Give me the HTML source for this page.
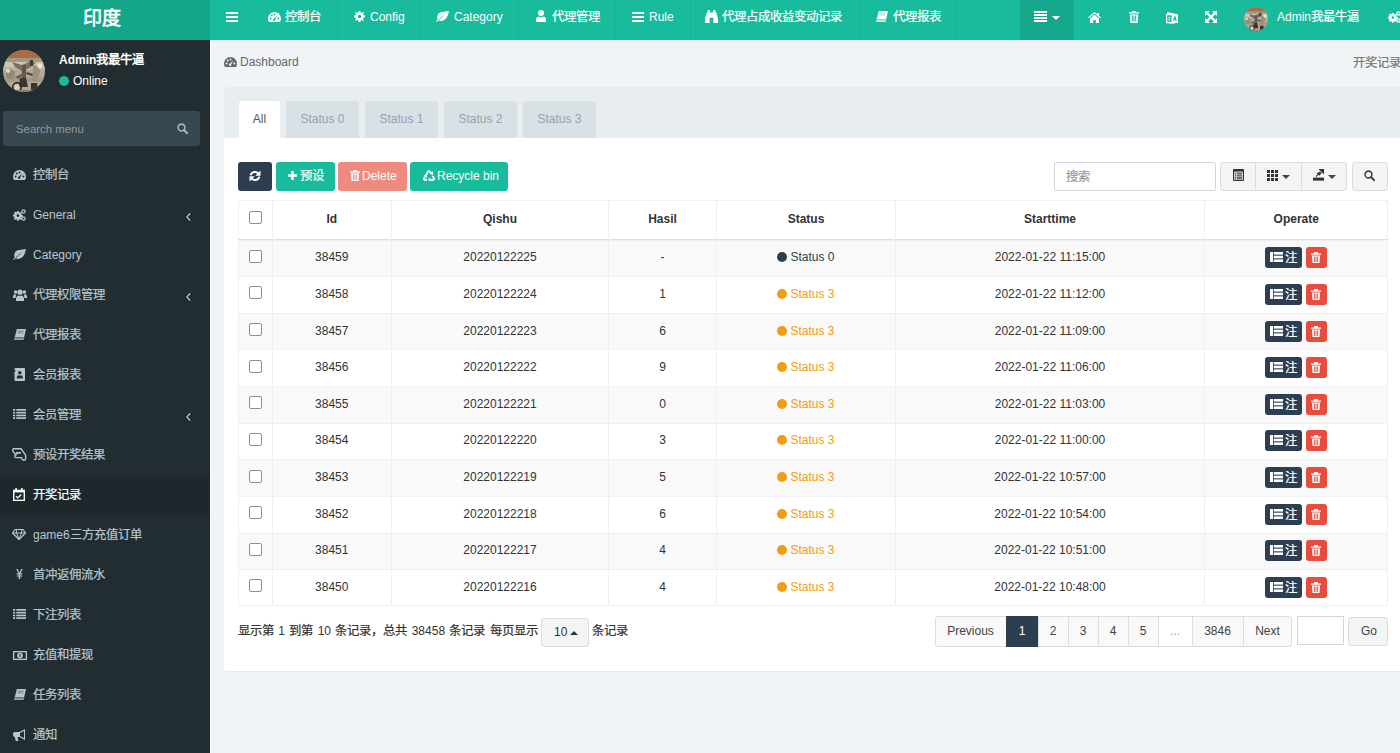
<!DOCTYPE html><html lang="zh-CN"><head><meta charset="utf-8"><style>
*{box-sizing:border-box;margin:0;padding:0}
html,body{width:1400px;height:753px;overflow:hidden;background:#f1f4f6}
body{font-family:"Liberation Sans",sans-serif;font-size:12px;color:#333;position:relative}
.a{position:absolute}
svg{display:block}
.nw{white-space:nowrap}
.c{font-size:1.033em;-webkit-text-stroke:0.22px currentColor}
.bo .c{font-weight:700;-webkit-text-stroke:0}
</style></head><body><div class="a" style="left:0;top:0;width:210px;height:40px;background:#15a589"></div>
<div class="a nw bo" style="left:83px;top:5px;font-size:18.4px;font-weight:bold;color:#fff;line-height:24px;top:6.5px"><span class="c">印度</span></div>
<div class="a" style="left:210px;top:0;width:1190px;height:40px;background:#18bc9c"></div>
<div class="a" style="left:226px;top:12px;color:#fff"><svg width="12" height="10" viewBox="0 0 12 10" fill="currentColor" ><rect width="12" height="2"/><rect y="4" width="12" height="2"/><rect y="8" width="12" height="2"/></svg></div>
<div class="a" style="left:337px;top:0;width:1px;height:40px;background:rgba(0,0,0,0.05)"></div>
<div class="a" style="left:268px;top:12px;color:#fff"><svg width="13" height="10" viewBox="0 0 13 10" fill="currentColor" ><path d="M6.5 0A6.5 6.5 0 0 0 0 6.5c0 1.3.3 2.4.9 3.5h11.2c.6-1.1.9-2.2.9-3.5A6.5 6.5 0 0 0 6.5 0z"/><g fill="#18bc9c"><circle cx="2.6" cy="6.6" r="1"/><circle cx="3.8" cy="3.6" r="1"/><circle cx="6.5" cy="2.4" r="1"/><circle cx="10.4" cy="6.6" r="1"/><path d="M9.6 3.2 7.2 7.2a1.2 1.2 0 1 1-1.2-.6z"/></g></svg></div>
<div class="a nw" style="left:285px;top:9px;line-height:16px;color:#fff"><span class="c">控制台</span></div>
<div class="a" style="left:420px;top:0;width:1px;height:40px;background:rgba(0,0,0,0.05)"></div>
<div class="a" style="left:354px;top:11px;color:#fff"><svg width="11" height="11" viewBox="0 0 12 12" fill="currentColor" ><path d="M5 0h2l.3 1.8 1.2.5L10 1.2 10.8 2l-1 1.5.5 1.2L12 5v2l-1.8.3-.5 1.2 1 1.5-.8.8-1.5-1-1.2.5L7 12H5l-.3-1.8-1.2-.5-1.5 1-.8-.8 1-1.5-.5-1.2L0 7V5l1.8-.3.5-1.2-1-1.5L2 1.2l1.5 1 1.2-.5z"/><circle cx="6" cy="6" r="2" fill="#18bc9c"/></svg></div>
<div class="a nw" style="left:370px;top:9px;line-height:16px;color:#fff">Config</div>
<div class="a" style="left:518px;top:0;width:1px;height:40px;background:rgba(0,0,0,0.05)"></div>
<div class="a" style="left:436px;top:11px;color:#fff"><svg width="13" height="11" viewBox="0 0 13 11" fill="currentColor"><path d="M13 0C9 1 3 0 1.5 4.5.8 6.6 1.4 8 2 8.6L0 10.3l.6.7 2-1.7C4.5 10.5 8 10 10 7.5 12 5 12.5 2 13 0zM3 8.6C5 6 7.5 4 10 3 7.5 4.5 5.2 6.5 3.6 9z"/></svg></div>
<div class="a nw" style="left:454px;top:9px;line-height:16px;color:#fff">Category</div>
<div class="a" style="left:615px;top:0;width:1px;height:40px;background:rgba(0,0,0,0.05)"></div>
<div class="a" style="left:536px;top:10px;color:#fff"><svg width="10" height="12" viewBox="0 0 10 12" fill="currentColor"><circle cx="5" cy="3" r="3"/><path d="M0 12V9.5C0 7.8 1.3 6.8 2.6 6.5 3.3 7 4.1 7.3 5 7.3S6.7 7 7.4 6.5C8.7 6.8 10 7.8 10 9.5V12z"/></svg></div>
<div class="a nw" style="left:552px;top:9px;line-height:16px;color:#fff"><span class="c">代理管理</span></div>
<div class="a" style="left:690px;top:0;width:1px;height:40px;background:rgba(0,0,0,0.05)"></div>
<div class="a" style="left:632px;top:12px;color:#fff"><svg width="12" height="10" viewBox="0 0 12 10" fill="currentColor" ><rect width="12" height="2"/><rect y="4" width="12" height="2"/><rect y="8" width="12" height="2"/></svg></div>
<div class="a nw" style="left:649px;top:9px;line-height:16px;color:#fff">Rule</div>
<div class="a" style="left:859px;top:0;width:1px;height:40px;background:rgba(0,0,0,0.05)"></div>
<div class="a" style="left:705px;top:10px;color:#fff"><svg width="13" height="13" viewBox="0 0 13 13" fill="currentColor" ><path d="M2.7 0h2v1.8h.5V8H4.6v5H0V8.5l1.6-5.3.9-1.4zM10.3 0h-2v1.8h-.5V8h.6v5H13V8.5l-1.6-5.3-.9-1.4z"/><rect x="5" y="2.6" width="3" height="5"/></svg></div>
<div class="a nw" style="left:722px;top:9px;line-height:16px;color:#fff"><span class="c">代理占成收益变动记录</span></div>
<div class="a" style="left:956px;top:0;width:1px;height:40px;background:rgba(0,0,0,0.05)"></div>
<div class="a" style="left:876px;top:11px;color:#fff"><svg width="12" height="11" viewBox="0 0 12 11" fill="currentColor" ><path d="M2.9 0H12L9.6 10.8H0z"/><path d="M.6 8.9h9.2" stroke="#18bc9c" stroke-width=".9"/><path d="M3.9 2.2h5.8M3.5 4h5.8" stroke="#18bc9c" stroke-width=".8" opacity=".55"/></svg></div>
<div class="a nw" style="left:893px;top:9px;line-height:16px;color:#fff"><span class="c">代理报表</span></div>
<div class="a" style="left:1020px;top:0;width:54px;height:40px;background:rgba(0,0,0,0.1)"></div>
<div class="a" style="left:1034px;top:11px"><svg width="13" height="11" fill="#fff"><rect width="13" height="2"/><rect y="3" width="13" height="2"/><rect y="6" width="13" height="2"/><rect y="9" width="13" height="2"/></svg></div>
<div class="a" style="left:1052px;top:16px;color:#fff"><svg width="8" height="4" viewBox="0 0 8 4" fill="currentColor"><path d="M0 0h8L4 4z"/></svg></div>
<div class="a" style="left:1088px;top:12px;color:#fff"><svg width="13" height="11" viewBox="0 0 13 11" fill="currentColor"><path d="M6.5 0 0 5.5l.8.8L6.5 1.5l5.7 4.8.8-.8L11 3.8V.8H9.5v1.7z"/><path d="M2 6.5 6.5 2.7 11 6.5V11H7.8V8H5.2v3H2z"/></svg></div>
<div class="a" style="left:1129px;top:11px;color:#fff"><svg width="10" height="12" viewBox="0 0 10 12" fill="currentColor"><path d="M3.2 0h3.6l.5 1.2H10V2.6H0V1.2h2.7z"/><path d="M.8 3.4h8.4L8.6 12H1.4zM2.8 4.5v6h1v-6zm1.7 0v6h1v-6zm1.7 0v6h1v-6z" fill-rule="evenodd"/></svg></div>
<div class="a" style="left:1166px;top:11px;color:#fff"><svg width="12" height="13" viewBox="0 0 12 13" fill="currentColor" ><path d="M1.2 1 11 3.2V4H1.2z"/><rect x=".6" y="3.6" width="5.6" height="8" fill="none" stroke="currentColor" stroke-width="1.2"/><path d="M6 3.2h6v8.8H6z"/><path d="M2.2 6h2.2v.9H2.2zM2.6 7.5h1.4v2.2H2.6z" opacity=".8"/><path d="M8.3 5.2h1.2l1.3 5H9.7l-.3-1.2H8.3L8 10.2H7z" fill="#18bc9c"/><path d="M3.5 12.5h5" stroke="currentColor" stroke-width=".9" opacity=".7"/></svg></div>
<div class="a" style="left:1205px;top:11px;color:#fff"><svg width="12" height="12" viewBox="0 0 12 12" fill="currentColor" ><path d="M2.2 2.2 9.8 9.8M9.8 2.2 2.2 9.8" stroke="currentColor" stroke-width="2.2"/><path d="M0 0h5L0 5zM12 0v5L7 0zM0 12V7l5 5zM12 12H7l5-5z"/></svg></div>
<div class="a" style="left:1244px;top:7px"><svg width="24" height="24" viewBox="0 0 42 42"><defs><clipPath id="cp2"><circle cx="21" cy="21" r="21"/></clipPath></defs><g clip-path="url(#cp2)">
<rect width="42" height="42" fill="#b3a895"/>
<rect y="0" width="42" height="8" fill="#ad6a47"/>
<path d="M0 8h42v4H0z" fill="#a6987f"/>
<path d="M2 12h38v5H2z" fill="#cfc6b6"/>
<path d="M0 17h42v3H0z" fill="#bdb29f"/>
<path d="M0 27h42v5H0z" fill="#a89b85"/>
<path d="M9 12 19 15 28 11 33 13 26 18 19 21 12 17z" fill="#7a705f"/>
<path d="M27 10h3v6h-3z" fill="#3f3a33"/>
<path d="M19 15h4v14h-4z" fill="#5e564a"/>
<path d="M3 21c3-2 7-2 9 1l-1 7c-3 1-6 0-8-2z" fill="#958a76"/>
<path d="M30 15c4 0 7 3 7 6l-2 9c-2 2-5 2-6 0z" fill="#9d917c"/>
<circle cx="37" cy="16" r="2.5" fill="#e9e5de"/>
<circle cx="5" cy="21" r="2" fill="#e0dbd2"/>
<path d="M17 28h6l2 9h-9z" fill="#3a352e"/>
<path d="M28 33h6l1 7h-7z" fill="#36312b"/>
<circle cx="14" cy="37" r="4.3" fill="none" stroke="#2b2823" stroke-width="1.5"/>
<circle cx="14" cy="37" r="2.6" fill="#d9d2c5"/>
<path d="M12 27 20 23l2 2-7 4z" fill="#6a6151"/>
<path d="M24 22l6 2-1 2-6-2z" fill="#4d463c"/>
<rect y="40" width="42" height="2" fill="#8d806a"/>
</g></svg></div>
<div class="a nw" style="left:1277px;top:9px;line-height:16px;color:#fff">Admin<span class="c">我最牛逼</span></div>
<div class="a" style="left:1388px;top:11px;color:#fff"><svg width="13" height="12" viewBox="0 0 13 12" fill="currentColor" ><path d="M3.5 2.5h1.6l.3 1.2.8.4 1-.7 1.1 1.1-.7 1 .4.8 1.2.3v1.6l-1.2.3-.4.8.7 1-1.1 1.1-1-.7-.8.4-.3 1.2H3.5l-.3-1.2-.8-.4-1 .7L.3 10l.7-1-.4-.8L-.6 7.9V6.3l1.2-.3.4-.8-.7-1L1.4 3.1l1 .7.8-.4z" transform="translate(.6 -.5)"/><circle cx="4.9" cy="6.6" r="1.3" fill="#18bc9c"/><circle cx="10.5" cy="2.5" r="2.2"/><circle cx="10.5" cy="2.5" r="1" fill="#18bc9c"/><circle cx="10.5" cy="9.5" r="2.2"/><circle cx="10.5" cy="9.5" r="1" fill="#18bc9c"/></svg></div>
<div class="a" style="left:0;top:40px;width:210px;height:713px;background:#222d32"></div>
<div class="a" style="left:3px;top:49.5px"><svg width="42" height="42" viewBox="0 0 42 42"><defs><clipPath id="cp1"><circle cx="21" cy="21" r="21"/></clipPath></defs><g clip-path="url(#cp1)">
<rect width="42" height="42" fill="#b3a895"/>
<rect y="0" width="42" height="8" fill="#ad6a47"/>
<path d="M0 8h42v4H0z" fill="#a6987f"/>
<path d="M2 12h38v5H2z" fill="#cfc6b6"/>
<path d="M0 17h42v3H0z" fill="#bdb29f"/>
<path d="M0 27h42v5H0z" fill="#a89b85"/>
<path d="M9 12 19 15 28 11 33 13 26 18 19 21 12 17z" fill="#7a705f"/>
<path d="M27 10h3v6h-3z" fill="#3f3a33"/>
<path d="M19 15h4v14h-4z" fill="#5e564a"/>
<path d="M3 21c3-2 7-2 9 1l-1 7c-3 1-6 0-8-2z" fill="#958a76"/>
<path d="M30 15c4 0 7 3 7 6l-2 9c-2 2-5 2-6 0z" fill="#9d917c"/>
<circle cx="37" cy="16" r="2.5" fill="#e9e5de"/>
<circle cx="5" cy="21" r="2" fill="#e0dbd2"/>
<path d="M17 28h6l2 9h-9z" fill="#3a352e"/>
<path d="M28 33h6l1 7h-7z" fill="#36312b"/>
<circle cx="14" cy="37" r="4.3" fill="none" stroke="#2b2823" stroke-width="1.5"/>
<circle cx="14" cy="37" r="2.6" fill="#d9d2c5"/>
<path d="M12 27 20 23l2 2-7 4z" fill="#6a6151"/>
<path d="M24 22l6 2-1 2-6-2z" fill="#4d463c"/>
<rect y="40" width="42" height="2" fill="#8d806a"/>
</g></svg></div>
<div class="a nw bo" style="left:59px;top:52px;font-weight:bold;color:#fff;line-height:16px">Admin<span class="c">我最牛逼</span></div>
<div class="a" style="left:59px;top:76px"><svg width="10" height="10" viewBox="0 0 10 10" fill="currentColor" ><circle cx="5" cy="5" r="5" fill="#18bc9c"/></svg></div>
<div class="a nw" style="left:73px;top:73px;color:#fff;line-height:16px">Online</div>
<div class="a" style="left:3px;top:111px;width:197px;height:35px;background:#374850;border-radius:3px"></div>
<div class="a nw" style="left:16px;top:121px;color:#8f9ca2;line-height:16px;font-size:11.4px">Search menu</div>
<div class="a" style="left:177px;top:123px;color:#a7b5bb"><svg width="11" height="11" viewBox="0 0 11 11" fill="currentColor" ><circle cx="4.5" cy="4.5" r="3.4" fill="none" stroke="currentColor" stroke-width="1.6"/><path d="M7 7l3.2 3.2" stroke="currentColor" stroke-width="2" stroke-linecap="round"/></svg></div>
<div class="a" style="left:13px;top:170px;color:#b8c7ce"><svg width="13" height="10" viewBox="0 0 13 10" fill="currentColor" ><path d="M6.5 0A6.5 6.5 0 0 0 0 6.5c0 1.3.3 2.4.9 3.5h11.2c.6-1.1.9-2.2.9-3.5A6.5 6.5 0 0 0 6.5 0z"/><g fill="#222d32"><circle cx="2.6" cy="6.6" r="1"/><circle cx="3.8" cy="3.6" r="1"/><circle cx="6.5" cy="2.4" r="1"/><circle cx="10.4" cy="6.6" r="1"/><path d="M9.6 3.2 7.2 7.2a1.2 1.2 0 1 1-1.2-.6z"/></g></svg></div>
<div class="a nw" style="left:33px;top:167px;line-height:16px;color:#b8c7ce"><span class="c">控制台</span></div>
<div class="a" style="left:13px;top:209px;color:#b8c7ce"><svg width="13" height="12" viewBox="0 0 13 12" fill="currentColor" ><path d="M3.5 2.5h1.6l.3 1.2.8.4 1-.7 1.1 1.1-.7 1 .4.8 1.2.3v1.6l-1.2.3-.4.8.7 1-1.1 1.1-1-.7-.8.4-.3 1.2H3.5l-.3-1.2-.8-.4-1 .7L.3 10l.7-1-.4-.8L-.6 7.9V6.3l1.2-.3.4-.8-.7-1L1.4 3.1l1 .7.8-.4z" transform="translate(.6 -.5)"/><circle cx="4.9" cy="6.6" r="1.3" fill="#222d32"/><circle cx="10.5" cy="2.5" r="2.2"/><circle cx="10.5" cy="2.5" r="1" fill="#222d32"/><circle cx="10.5" cy="9.5" r="2.2"/><circle cx="10.5" cy="9.5" r="1" fill="#222d32"/></svg></div>
<div class="a nw" style="left:33px;top:207px;line-height:16px;color:#b8c7ce">General</div>
<div class="a" style="left:186px;top:213px;color:#b8c7ce"><svg width="5" height="8" viewBox="0 0 5 8" fill="currentColor" ><path d="M4.2.5.8 4l3.4 3.5" fill="none" stroke="currentColor" stroke-width="1.3"/></svg></div>
<div class="a" style="left:13px;top:249px;color:#b8c7ce"><svg width="13" height="11" viewBox="0 0 13 11" fill="currentColor"><path d="M13 0C9 1 3 0 1.5 4.5.8 6.6 1.4 8 2 8.6L0 10.3l.6.7 2-1.7C4.5 10.5 8 10 10 7.5 12 5 12.5 2 13 0zM3 8.6C5 6 7.5 4 10 3 7.5 4.5 5.2 6.5 3.6 9z"/></svg></div>
<div class="a nw" style="left:33px;top:247px;line-height:16px;color:#b8c7ce">Category</div>
<div class="a" style="left:13px;top:289px;color:#b8c7ce"><svg width="14" height="12" viewBox="0 0 14 12" fill="currentColor" ><circle cx="7" cy="3.2" r="2.6"/><path d="M3 12V9.6C3 7.8 4.4 6.6 5.6 6.4 6 6.7 6.5 6.9 7 6.9s1-.2 1.4-.5C9.6 6.6 11 7.8 11 9.6V12z"/><circle cx="2.6" cy="3" r="1.8"/><circle cx="11.4" cy="3" r="1.8"/><path d="M0 9V7.5C0 6.4.8 5.5 1.8 5.3c.4.3.8.4 1.3.4.2 0 .4 0 .6-.1-.6.6-1 1.4-1 2.4V9zM14 9V7.5c0-1.1-.8-2-1.8-2.2-.4.3-.8.4-1.3.4-.2 0-.4 0-.6-.1.6.6 1 1.4 1 2.4V9z"/></svg></div>
<div class="a nw" style="left:33px;top:287px;line-height:16px;color:#b8c7ce"><span class="c">代理权限管理</span></div>
<div class="a" style="left:186px;top:293px;color:#b8c7ce"><svg width="5" height="8" viewBox="0 0 5 8" fill="currentColor" ><path d="M4.2.5.8 4l3.4 3.5" fill="none" stroke="currentColor" stroke-width="1.3"/></svg></div>
<div class="a" style="left:14px;top:329px;color:#b8c7ce"><svg width="12" height="11" viewBox="0 0 12 11" fill="currentColor" ><path d="M2.9 0H12L9.6 10.8H0z"/><path d="M.6 8.9h9.2" stroke="#222d32" stroke-width=".9"/><path d="M3.9 2.2h5.8M3.5 4h5.8" stroke="#222d32" stroke-width=".8" opacity=".55"/></svg></div>
<div class="a nw" style="left:33px;top:327px;line-height:16px;color:#b8c7ce"><span class="c">代理报表</span></div>
<div class="a" style="left:14px;top:368px;color:#b8c7ce"><svg width="11" height="13" viewBox="0 0 11 13" fill="currentColor" ><rect x="0.5" y="0" width="10.5" height="13" rx="1"/><rect x="0" y="2" width="1.5" height="1.5" fill="#222d32"/><circle cx="5.8" cy="4.8" r="1.8" fill="#222d32"/><path d="M2.8 10.5V9.2c0-1 .9-1.8 1.8-1.9.4.2.8.4 1.2.4s.8-.2 1.2-.4c.9.1 1.8.9 1.8 1.9v1.3z" fill="#222d32"/></svg></div>
<div class="a nw" style="left:33px;top:367px;line-height:16px;color:#b8c7ce"><span class="c">会员报表</span></div>
<div class="a" style="left:13px;top:409px;color:#b8c7ce"><svg width="13" height="10" viewBox="0 0 13 10" fill="currentColor" ><rect width="2.2" height="1.7"/><rect x="3.3" width="9.7" height="1.7"/><rect y="2.8" width="2.2" height="1.7"/><rect x="3.3" y="2.8" width="9.7" height="1.7"/><rect y="5.6" width="2.2" height="1.7"/><rect x="3.3" y="5.6" width="9.7" height="1.7"/><rect y="8.3" width="2.2" height="1.7"/><rect x="3.3" y="8.3" width="9.7" height="1.7"/></svg></div>
<div class="a nw" style="left:33px;top:407px;line-height:16px;color:#b8c7ce"><span class="c">会员管理</span></div>
<div class="a" style="left:186px;top:413px;color:#b8c7ce"><svg width="5" height="8" viewBox="0 0 5 8" fill="currentColor" ><path d="M4.2.5.8 4l3.4 3.5" fill="none" stroke="currentColor" stroke-width="1.3"/></svg></div>
<div class="a" style="left:12px;top:448px;color:#b8c7ce"><svg width="15" height="13" viewBox="0 0 15 13" fill="currentColor" ><path d="M1.6 .8H9.2L13.6 7.2V11Q13.6 12 12.6 12H11.4Q10.6 12 10.2 11.2L9.4 9.6H3.8Q2.8 9.6 2.8 8.6V7.8Q2.8 6.8 3.8 6.8H4.4L1.5 4.2Q.8 3.5 .8 2.6V1.6Q.8 .8 1.6 .8z" fill="none" stroke="currentColor" stroke-width="1.4" stroke-linejoin="round"/><rect x="4" y="4" width="4.8" height="1.8"/></svg></div>
<div class="a nw" style="left:33px;top:447px;line-height:16px;color:#b8c7ce"><span class="c">预设开奖结果</span></div>
<div class="a" style="left:0;top:476px;width:210px;height:39px;background:#1e282c"></div>
<div class="a" style="left:13px;top:488px;color:#fff"><svg width="12" height="13" viewBox="0 0 12 13" fill="currentColor" ><path d="M0 1.8h2.3V0h1.6v1.8h4.2V0h1.6v1.8H12V13H0z"/><rect x="1.4" y="4.4" width="9.2" height="7.3" fill="#1e282c"/><path d="M3.4 7.8l1.3 1.3 3.2-3 .8.8-4 3.8-2.1-2.1z"/></svg></div>
<div class="a nw" style="left:33px;top:487px;line-height:16px;color:#fff"><span class="c">开奖记录</span></div>
<div class="a" style="left:12px;top:529px;color:#b8c7ce"><svg width="14" height="11" viewBox="0 0 14 11" fill="currentColor" ><path d="M3 .5h8l2.5 3.5L7 10.5.5 4z" fill="none" stroke="currentColor" stroke-width="1.2" stroke-linejoin="round"/><path d="M.8 4h12.4M4.5 4 7 10M9.5 4 7 10M4.3 .8 4.5 4M9.7 .8 9.5 4" fill="none" stroke="currentColor" stroke-width="1"/></svg></div>
<div class="a nw" style="left:33px;top:527px;line-height:16px;color:#b8c7ce">game6<span class="c">三方充值订单</span></div>
<div class="a" style="left:16px;top:569px;color:#b8c7ce"><svg width="7" height="10" viewBox="0 0 8 12" fill="currentColor" ><path d="M0 0h1.8L4 4.5 6.2 0H8L5.3 5.2H7.3v1.3H4.9v1.2h2.4V9H4.9v3H3.1V9H.7V7.7h2.4V6.5H.7V5.2h2L0 0z"/></svg></div>
<div class="a nw" style="left:33px;top:567px;line-height:16px;color:#b8c7ce"><span class="c">首冲返佣流水</span></div>
<div class="a" style="left:13px;top:609px;color:#b8c7ce"><svg width="13" height="10" viewBox="0 0 13 10" fill="currentColor" ><rect width="2.2" height="1.7"/><rect x="3.3" width="9.7" height="1.7"/><rect y="2.8" width="2.2" height="1.7"/><rect x="3.3" y="2.8" width="9.7" height="1.7"/><rect y="5.6" width="2.2" height="1.7"/><rect x="3.3" y="5.6" width="9.7" height="1.7"/><rect y="8.3" width="2.2" height="1.7"/><rect x="3.3" y="8.3" width="9.7" height="1.7"/></svg></div>
<div class="a nw" style="left:33px;top:607px;line-height:16px;color:#b8c7ce"><span class="c">下注列表</span></div>
<div class="a" style="left:13px;top:651px;color:#b8c7ce"><svg width="14" height="9" viewBox="0 0 14 9" fill="currentColor" ><rect width="14" height="9"/><rect x="1.3" y="1.3" width="11.4" height="6.4" fill="#222d32"/><ellipse cx="7" cy="4.5" rx="2.8" ry="2.9"/><rect x="6.5" y="2.9" width="1.1" height="3.2" fill="#222d32"/></svg></div>
<div class="a nw" style="left:33px;top:647px;line-height:16px;color:#b8c7ce"><span class="c">充值和提现</span></div>
<div class="a" style="left:14px;top:689px;color:#b8c7ce"><svg width="12" height="11" viewBox="0 0 12 11" fill="currentColor" ><path d="M2.9 0H12L9.6 10.8H0z"/><path d="M.6 8.9h9.2" stroke="#222d32" stroke-width=".9"/><path d="M3.9 2.2h5.8M3.5 4h5.8" stroke="#222d32" stroke-width=".8" opacity=".55"/></svg></div>
<div class="a nw" style="left:33px;top:687px;line-height:16px;color:#b8c7ce"><span class="c">任务列表</span></div>
<div class="a" style="left:13px;top:729px;color:#b8c7ce"><svg width="13" height="12" viewBox="0 0 13 12" fill="currentColor" ><path d="M12 0v11L6.5 8H4.5l.8 3.2c.1.4-.2.8-.6.8H3.2c-.3 0-.5-.2-.6-.5L1.8 8C.8 7.9 0 7 0 6V5c0-1.1.9-2 2-2h4.5z"/><path d="M11 2 7 3.9v3.2L11 9z" fill="#222d32"/></svg></div>
<div class="a nw" style="left:33px;top:727px;line-height:16px;color:#b8c7ce"><span class="c">通知</span></div>
<div class="a" style="left:210px;top:40px;width:1px;height:713px;background:#fbfcfd"></div>
<div class="a" style="left:211px;top:40px;width:1189px;height:3px;background:linear-gradient(#e6eaed,#f1f4f6)"></div>
<div class="a" style="left:224px;top:57px;color:#666"><svg width="13" height="10" viewBox="0 0 13 10" fill="currentColor" ><path d="M6.5 0A6.5 6.5 0 0 0 0 6.5c0 1.3.3 2.4.9 3.5h11.2c.6-1.1.9-2.2.9-3.5A6.5 6.5 0 0 0 6.5 0z"/><g fill="#f1f4f6"><circle cx="2.6" cy="6.6" r="1"/><circle cx="3.8" cy="3.6" r="1"/><circle cx="6.5" cy="2.4" r="1"/><circle cx="10.4" cy="6.6" r="1"/><path d="M9.6 3.2 7.2 7.2a1.2 1.2 0 1 1-1.2-.6z"/></g></svg></div>
<div class="a nw" style="left:240px;top:54px;color:#666;line-height:16px">Dashboard</div>
<div class="a nw" style="left:1353px;top:55px;color:#777;line-height:16px"><span class="c">开奖记录</span></div>
<div class="a" style="left:224px;top:87px;width:1180px;height:584px;background:#fff;border-radius:3px;box-shadow:0 1px 1px rgba(0,0,0,0.05)"></div>
<div class="a" style="left:224px;top:87px;width:1180px;height:51px;background:#e8edf0;border-radius:3px 3px 0 0"></div>
<div class="a nw" style="left:239px;top:101px;width:41px;height:37px;background:#fff;border-radius:3px 3px 0 0;color:#555;text-align:center;line-height:36px">All</div>
<div class="a nw" style="left:286px;top:101px;width:73px;height:37px;background:#d9e0e6;border-radius:3px 3px 0 0;color:#95a2ab;text-align:center;line-height:36px">Status 0</div>
<div class="a nw" style="left:365px;top:101px;width:73px;height:37px;background:#d9e0e6;border-radius:3px 3px 0 0;color:#95a2ab;text-align:center;line-height:36px">Status 1</div>
<div class="a nw" style="left:444px;top:101px;width:73px;height:37px;background:#d9e0e6;border-radius:3px 3px 0 0;color:#95a2ab;text-align:center;line-height:36px">Status 2</div>
<div class="a nw" style="left:523px;top:101px;width:73px;height:37px;background:#d9e0e6;border-radius:3px 3px 0 0;color:#95a2ab;text-align:center;line-height:36px">Status 3</div>
<div class="a nw" style="left:238px;top:162px;width:34px;height:29px;background:#2c3e50;border-radius:3px;color:#fff;"><div class="a" style="left:11px;top:8px"><svg width="12" height="12" viewBox="0 0 12 12" fill="currentColor" ><g fill="none" stroke="currentColor" stroke-width="2.1"><path d="M1.6 5.2A4.5 4.5 0 0 1 9.4 3.6"/><path d="M10.4 6.8A4.5 4.5 0 0 1 2.6 8.4"/></g><path d="M11.5 0.6V5.8H6.3z"/><path d="M.5 11.4V6.2h5.2z"/></svg></div></div>
<div class="a nw" style="left:276px;top:162px;width:59px;height:29px;background:#18bc9c;border-radius:3px;color:#fff;"><div class="a" style="left:12px;top:9px"><svg width="9" height="9" viewBox="0 0 9 9" fill="currentColor" ><path d="M3.25 0h2.5v3.25H9v2.5H5.75V9h-2.5V5.75H0v-2.5h3.25z"/></svg></div><div class="a" style="left:24px;top:6px;line-height:16px"><span class="c">预设</span></div></div>
<div class="a nw" style="left:338px;top:162px;width:69px;height:29px;background:#ef8a80;border-radius:3px;color:#fff;"><div class="a" style="left:12px;top:8px"><svg width="10" height="11" viewBox="0 0 10 11" fill="currentColor" ><path d="M3.3 0h3.4l.5 1.4H10v1.3H0V1.4h2.8z"/><path d="M.9 3.4h8.2L8.5 11h-7zM2.9 4.6v5.4h.9V4.6zm1.65 0v5.4h.9V4.6zm1.65 0v5.4h.9V4.6z" fill-rule="evenodd"/></svg></div><div class="a" style="left:24px;top:6px;line-height:16px">Delete</div></div>
<div class="a nw" style="left:410px;top:162px;width:98px;height:29px;background:#18bc9c;border-radius:3px;color:#fff;"><div class="a" style="left:13px;top:8px"><svg width="12" height="11" viewBox="0 0 12 11" fill="currentColor" ><g fill="none" stroke="currentColor" stroke-width="1.9" stroke-linejoin="round"><path d="M2.3 6.3 4.9 1.8c.5-.8 1.6-.8 2.1 0l.9 1.5"/><path d="M9.6 6 10.9 8.2c.5.8-.1 1.8-1 1.8H6.8"/><path d="M4 10H2.1c-.9 0-1.5-1-1-1.8l.5-.9"/></g><path d="M6.3 3.2 10 1.3l.1 4.3z"/><path d="M7.4 7.6v3.9L4.6 9.6z"/><path d="M.3 5.8 3.6 5l.6 3.6z"/></svg></div><div class="a" style="left:27px;top:6px;line-height:16px">Recycle bin</div></div>
<div class="a" style="left:1054px;top:162px;width:162px;height:29px;background:#fff;border:1px solid #d2d6de;border-radius:2px"></div>
<div class="a nw" style="left:1066px;top:169px;color:#999;line-height:16px"><span class="c">搜索</span></div>
<div class="a" style="left:1220px;top:162px;width:127px;height:29px;background:#f4f4f4;border:1px solid #ddd;border-radius:3px"></div>
<div class="a" style="left:1255px;top:163px;width:1px;height:27px;background:#ddd"></div>
<div class="a" style="left:1301px;top:163px;width:1px;height:27px;background:#ddd"></div>
<div class="a" style="left:1233px;top:169px;color:#333"><svg width="11" height="12" viewBox="0 0 11 12" fill="currentColor" ><rect x="0" y="0" width="11" height="12" rx="1"/><rect x="1.1" y="2.6" width="8.8" height="8.3" fill="#f4f4f4"/><rect x="1.8" y="3.6" width="1.4" height="1.1"/><rect x="3.8" y="3.6" width="5.4" height="1.1"/><rect x="1.8" y="5.6" width="1.4" height="1.1"/><rect x="3.8" y="5.6" width="5.4" height="1.1"/><rect x="1.8" y="7.6" width="1.4" height="1.1"/><rect x="3.8" y="7.6" width="5.4" height="1.1"/><rect x="1.8" y="9.3" width="1.4" height="1"/><rect x="3.8" y="9.3" width="5.4" height="1"/></svg></div>
<div class="a" style="left:1267px;top:170px;color:#333"><svg width="11" height="11" viewBox="0 0 11 11" fill="currentColor" ><rect width="3" height="3"/><rect x="4" width="3" height="3"/><rect x="8" width="3" height="3"/><rect y="4" width="3" height="3"/><rect x="4" y="4" width="3" height="3"/><rect x="8" y="4" width="3" height="3"/><rect y="8" width="3" height="3"/><rect x="4" y="8" width="3" height="3"/><rect x="8" y="8" width="3" height="3"/></svg></div>
<div class="a" style="left:1282px;top:175px;color:#444"><svg width="8" height="4" viewBox="0 0 8 4" fill="currentColor"><path d="M0 0h8L4 4z"/></svg></div>
<div class="a" style="left:1313px;top:169px;color:#333"><svg width="12" height="12" viewBox="0 0 12 12" fill="currentColor" ><rect x="0" y="8.6" width="11" height="3"/><path d="M5.5 0H11v5.5z"/><path d="M2.5 7.3 4.6 5.2 3.6 4.2 7.2 2.6 8.6 4 6.6 6.8 5.6 5.8 3.6 7.8z"/></svg></div>
<div class="a" style="left:1328px;top:175px;color:#444"><svg width="8" height="4" viewBox="0 0 8 4" fill="currentColor"><path d="M0 0h8L4 4z"/></svg></div>
<div class="a" style="left:1352px;top:162px;width:36px;height:29px;background:#f4f4f4;border:1px solid #ddd;border-radius:3px"></div>
<div class="a" style="left:1364px;top:170px;color:#444"><svg width="11" height="11" viewBox="0 0 11 11" fill="currentColor" ><circle cx="4.5" cy="4.5" r="3.4" fill="none" stroke="currentColor" stroke-width="1.6"/><path d="M7 7l3.2 3.2" stroke="currentColor" stroke-width="2" stroke-linecap="round"/></svg></div>
<div class="a" style="left:238px;top:200px;width:1150px;height:406px;border:1px solid #f0f0f0;background:#fff"></div>
<div class="a" style="left:239px;top:240px;width:1148px;height:36px;background:#f9f9f9;border-top:1px solid #f0f0f0"></div>
<div class="a" style="left:239px;top:276px;width:1148px;height:37px;background:#fff;border-top:1px solid #f0f0f0"></div>
<div class="a" style="left:239px;top:313px;width:1148px;height:36px;background:#f9f9f9;border-top:1px solid #f0f0f0"></div>
<div class="a" style="left:239px;top:349px;width:1148px;height:37px;background:#fff;border-top:1px solid #f0f0f0"></div>
<div class="a" style="left:239px;top:386px;width:1148px;height:37px;background:#f9f9f9;border-top:1px solid #f0f0f0"></div>
<div class="a" style="left:239px;top:423px;width:1148px;height:36px;background:#fff;border-top:1px solid #f0f0f0"></div>
<div class="a" style="left:239px;top:459px;width:1148px;height:37px;background:#f9f9f9;border-top:1px solid #f0f0f0"></div>
<div class="a" style="left:239px;top:496px;width:1148px;height:37px;background:#fff;border-top:1px solid #f0f0f0"></div>
<div class="a" style="left:239px;top:533px;width:1148px;height:36px;background:#f9f9f9;border-top:1px solid #f0f0f0"></div>
<div class="a" style="left:239px;top:569px;width:1148px;height:37px;background:#fff;border-top:1px solid #f0f0f0"></div>
<div class="a" style="left:238px;top:239px;width:1150px;height:1px;background:#ddd"></div>
<div class="a" style="left:238px;top:605px;width:1150px;height:1px;background:#f0f0f0"></div>
<div class="a" style="left:272px;top:200px;width:1px;height:406px;background:#f0f0f0"></div>
<div class="a" style="left:391px;top:200px;width:1px;height:406px;background:#f0f0f0"></div>
<div class="a" style="left:608px;top:200px;width:1px;height:406px;background:#f0f0f0"></div>
<div class="a" style="left:716px;top:200px;width:1px;height:406px;background:#f0f0f0"></div>
<div class="a" style="left:895px;top:200px;width:1px;height:406px;background:#f0f0f0"></div>
<div class="a" style="left:1204px;top:200px;width:1px;height:406px;background:#f0f0f0"></div>
<div class="a nw" style="left:272px;top:211px;width:119.5px;text-align:center;font-weight:bold;line-height:16px">Id</div>
<div class="a nw" style="left:391.5px;top:211px;width:217.0px;text-align:center;font-weight:bold;line-height:16px">Qishu</div>
<div class="a nw" style="left:608.5px;top:211px;width:108.0px;text-align:center;font-weight:bold;line-height:16px">Hasil</div>
<div class="a nw" style="left:716.5px;top:211px;width:179.0px;text-align:center;font-weight:bold;line-height:16px">Status</div>
<div class="a nw" style="left:895.5px;top:211px;width:309.0px;text-align:center;font-weight:bold;line-height:16px">Starttime</div>
<div class="a nw" style="left:1204.5px;top:211px;width:183.5px;text-align:center;font-weight:bold;line-height:16px">Operate</div>
<div class="a" style="left:249px;top:211px;width:13px;height:13px;border:1px solid #8f8f8f;border-radius:2px;background:#fff"></div>
<div class="a" style="left:249px;top:250px;width:13px;height:13px;border:1px solid #8f8f8f;border-radius:2px;background:#fff"></div>
<div class="a nw" style="left:272px;top:249px;width:119.5px;text-align:center;line-height:16px">38459</div>
<div class="a nw" style="left:391.5px;top:249px;width:217.0px;text-align:center;line-height:16px">20220122225</div>
<div class="a nw" style="left:608.5px;top:249px;width:108.0px;text-align:center;line-height:16px">-</div>
<div class="a nw" style="left:716.5px;top:249px;width:179.0px;text-align:center;line-height:16px;color:#2c3e50"><span style="display:inline-block;width:10px;height:10px;border-radius:50%;background:#2c3e50;vertical-align:-1px;margin-right:3px"></span>Status 0</div>
<div class="a nw" style="left:895.5px;top:249px;width:309.0px;text-align:center;line-height:16px">2022-01-22 11:15:00</div>
<div class="a nw" style="left:1265px;top:247px;width:37px;height:21px;background:#2c3e50;border-radius:3px;color:#fff;"><div class="a" style="left:5px;top:5px"><svg width="13" height="10" viewBox="0 0 13 10" fill="currentColor" ><rect width="3" height="10"/><rect x="3.8" width="9.2" height="2.6"/><rect x="3.8" y="3.7" width="9.2" height="2.6"/><rect x="3.8" y="7.4" width="9.2" height="2.6"/></svg></div><div class="a" style="left:20px;top:3px;line-height:16px"><span class="c">注</span></div></div>
<div class="a nw" style="left:1306px;top:247px;width:21px;height:21px;background:#e74c3c;border-radius:3px;color:#fff;"><div class="a" style="left:5px;top:5px"><svg width="10" height="11" viewBox="0 0 10 11" fill="currentColor" ><path d="M3.3 0h3.4l.5 1.4H10v1.3H0V1.4h2.8z"/><path d="M.9 3.4h8.2L8.5 11h-7zM2.9 4.6v5.4h.9V4.6zm1.65 0v5.4h.9V4.6zm1.65 0v5.4h.9V4.6z" fill-rule="evenodd"/></svg></div></div>
<div class="a" style="left:249px;top:286px;width:13px;height:13px;border:1px solid #8f8f8f;border-radius:2px;background:#fff"></div>
<div class="a nw" style="left:272px;top:286px;width:119.5px;text-align:center;line-height:16px">38458</div>
<div class="a nw" style="left:391.5px;top:286px;width:217.0px;text-align:center;line-height:16px">20220122224</div>
<div class="a nw" style="left:608.5px;top:286px;width:108.0px;text-align:center;line-height:16px">1</div>
<div class="a nw" style="left:716.5px;top:286px;width:179.0px;text-align:center;line-height:16px;color:#f39c12"><span style="display:inline-block;width:10px;height:10px;border-radius:50%;background:#f39c12;vertical-align:-1px;margin-right:3px"></span>Status 3</div>
<div class="a nw" style="left:895.5px;top:286px;width:309.0px;text-align:center;line-height:16px">2022-01-22 11:12:00</div>
<div class="a nw" style="left:1265px;top:284px;width:37px;height:21px;background:#2c3e50;border-radius:3px;color:#fff;"><div class="a" style="left:5px;top:5px"><svg width="13" height="10" viewBox="0 0 13 10" fill="currentColor" ><rect width="3" height="10"/><rect x="3.8" width="9.2" height="2.6"/><rect x="3.8" y="3.7" width="9.2" height="2.6"/><rect x="3.8" y="7.4" width="9.2" height="2.6"/></svg></div><div class="a" style="left:20px;top:3px;line-height:16px"><span class="c">注</span></div></div>
<div class="a nw" style="left:1306px;top:284px;width:21px;height:21px;background:#e74c3c;border-radius:3px;color:#fff;"><div class="a" style="left:5px;top:5px"><svg width="10" height="11" viewBox="0 0 10 11" fill="currentColor" ><path d="M3.3 0h3.4l.5 1.4H10v1.3H0V1.4h2.8z"/><path d="M.9 3.4h8.2L8.5 11h-7zM2.9 4.6v5.4h.9V4.6zm1.65 0v5.4h.9V4.6zm1.65 0v5.4h.9V4.6z" fill-rule="evenodd"/></svg></div></div>
<div class="a" style="left:249px;top:323px;width:13px;height:13px;border:1px solid #8f8f8f;border-radius:2px;background:#fff"></div>
<div class="a nw" style="left:272px;top:323px;width:119.5px;text-align:center;line-height:16px">38457</div>
<div class="a nw" style="left:391.5px;top:323px;width:217.0px;text-align:center;line-height:16px">20220122223</div>
<div class="a nw" style="left:608.5px;top:323px;width:108.0px;text-align:center;line-height:16px">6</div>
<div class="a nw" style="left:716.5px;top:323px;width:179.0px;text-align:center;line-height:16px;color:#f39c12"><span style="display:inline-block;width:10px;height:10px;border-radius:50%;background:#f39c12;vertical-align:-1px;margin-right:3px"></span>Status 3</div>
<div class="a nw" style="left:895.5px;top:323px;width:309.0px;text-align:center;line-height:16px">2022-01-22 11:09:00</div>
<div class="a nw" style="left:1265px;top:321px;width:37px;height:21px;background:#2c3e50;border-radius:3px;color:#fff;"><div class="a" style="left:5px;top:5px"><svg width="13" height="10" viewBox="0 0 13 10" fill="currentColor" ><rect width="3" height="10"/><rect x="3.8" width="9.2" height="2.6"/><rect x="3.8" y="3.7" width="9.2" height="2.6"/><rect x="3.8" y="7.4" width="9.2" height="2.6"/></svg></div><div class="a" style="left:20px;top:3px;line-height:16px"><span class="c">注</span></div></div>
<div class="a nw" style="left:1306px;top:321px;width:21px;height:21px;background:#e74c3c;border-radius:3px;color:#fff;"><div class="a" style="left:5px;top:5px"><svg width="10" height="11" viewBox="0 0 10 11" fill="currentColor" ><path d="M3.3 0h3.4l.5 1.4H10v1.3H0V1.4h2.8z"/><path d="M.9 3.4h8.2L8.5 11h-7zM2.9 4.6v5.4h.9V4.6zm1.65 0v5.4h.9V4.6zm1.65 0v5.4h.9V4.6z" fill-rule="evenodd"/></svg></div></div>
<div class="a" style="left:249px;top:360px;width:13px;height:13px;border:1px solid #8f8f8f;border-radius:2px;background:#fff"></div>
<div class="a nw" style="left:272px;top:359px;width:119.5px;text-align:center;line-height:16px">38456</div>
<div class="a nw" style="left:391.5px;top:359px;width:217.0px;text-align:center;line-height:16px">20220122222</div>
<div class="a nw" style="left:608.5px;top:359px;width:108.0px;text-align:center;line-height:16px">9</div>
<div class="a nw" style="left:716.5px;top:359px;width:179.0px;text-align:center;line-height:16px;color:#f39c12"><span style="display:inline-block;width:10px;height:10px;border-radius:50%;background:#f39c12;vertical-align:-1px;margin-right:3px"></span>Status 3</div>
<div class="a nw" style="left:895.5px;top:359px;width:309.0px;text-align:center;line-height:16px">2022-01-22 11:06:00</div>
<div class="a nw" style="left:1265px;top:357px;width:37px;height:21px;background:#2c3e50;border-radius:3px;color:#fff;"><div class="a" style="left:5px;top:5px"><svg width="13" height="10" viewBox="0 0 13 10" fill="currentColor" ><rect width="3" height="10"/><rect x="3.8" width="9.2" height="2.6"/><rect x="3.8" y="3.7" width="9.2" height="2.6"/><rect x="3.8" y="7.4" width="9.2" height="2.6"/></svg></div><div class="a" style="left:20px;top:3px;line-height:16px"><span class="c">注</span></div></div>
<div class="a nw" style="left:1306px;top:357px;width:21px;height:21px;background:#e74c3c;border-radius:3px;color:#fff;"><div class="a" style="left:5px;top:5px"><svg width="10" height="11" viewBox="0 0 10 11" fill="currentColor" ><path d="M3.3 0h3.4l.5 1.4H10v1.3H0V1.4h2.8z"/><path d="M.9 3.4h8.2L8.5 11h-7zM2.9 4.6v5.4h.9V4.6zm1.65 0v5.4h.9V4.6zm1.65 0v5.4h.9V4.6z" fill-rule="evenodd"/></svg></div></div>
<div class="a" style="left:249px;top:396px;width:13px;height:13px;border:1px solid #8f8f8f;border-radius:2px;background:#fff"></div>
<div class="a nw" style="left:272px;top:396px;width:119.5px;text-align:center;line-height:16px">38455</div>
<div class="a nw" style="left:391.5px;top:396px;width:217.0px;text-align:center;line-height:16px">20220122221</div>
<div class="a nw" style="left:608.5px;top:396px;width:108.0px;text-align:center;line-height:16px">0</div>
<div class="a nw" style="left:716.5px;top:396px;width:179.0px;text-align:center;line-height:16px;color:#f39c12"><span style="display:inline-block;width:10px;height:10px;border-radius:50%;background:#f39c12;vertical-align:-1px;margin-right:3px"></span>Status 3</div>
<div class="a nw" style="left:895.5px;top:396px;width:309.0px;text-align:center;line-height:16px">2022-01-22 11:03:00</div>
<div class="a nw" style="left:1265px;top:394px;width:37px;height:21px;background:#2c3e50;border-radius:3px;color:#fff;"><div class="a" style="left:5px;top:5px"><svg width="13" height="10" viewBox="0 0 13 10" fill="currentColor" ><rect width="3" height="10"/><rect x="3.8" width="9.2" height="2.6"/><rect x="3.8" y="3.7" width="9.2" height="2.6"/><rect x="3.8" y="7.4" width="9.2" height="2.6"/></svg></div><div class="a" style="left:20px;top:3px;line-height:16px"><span class="c">注</span></div></div>
<div class="a nw" style="left:1306px;top:394px;width:21px;height:21px;background:#e74c3c;border-radius:3px;color:#fff;"><div class="a" style="left:5px;top:5px"><svg width="10" height="11" viewBox="0 0 10 11" fill="currentColor" ><path d="M3.3 0h3.4l.5 1.4H10v1.3H0V1.4h2.8z"/><path d="M.9 3.4h8.2L8.5 11h-7zM2.9 4.6v5.4h.9V4.6zm1.65 0v5.4h.9V4.6zm1.65 0v5.4h.9V4.6z" fill-rule="evenodd"/></svg></div></div>
<div class="a" style="left:249px;top:433px;width:13px;height:13px;border:1px solid #8f8f8f;border-radius:2px;background:#fff"></div>
<div class="a nw" style="left:272px;top:432px;width:119.5px;text-align:center;line-height:16px">38454</div>
<div class="a nw" style="left:391.5px;top:432px;width:217.0px;text-align:center;line-height:16px">20220122220</div>
<div class="a nw" style="left:608.5px;top:432px;width:108.0px;text-align:center;line-height:16px">3</div>
<div class="a nw" style="left:716.5px;top:432px;width:179.0px;text-align:center;line-height:16px;color:#f39c12"><span style="display:inline-block;width:10px;height:10px;border-radius:50%;background:#f39c12;vertical-align:-1px;margin-right:3px"></span>Status 3</div>
<div class="a nw" style="left:895.5px;top:432px;width:309.0px;text-align:center;line-height:16px">2022-01-22 11:00:00</div>
<div class="a nw" style="left:1265px;top:430px;width:37px;height:21px;background:#2c3e50;border-radius:3px;color:#fff;"><div class="a" style="left:5px;top:5px"><svg width="13" height="10" viewBox="0 0 13 10" fill="currentColor" ><rect width="3" height="10"/><rect x="3.8" width="9.2" height="2.6"/><rect x="3.8" y="3.7" width="9.2" height="2.6"/><rect x="3.8" y="7.4" width="9.2" height="2.6"/></svg></div><div class="a" style="left:20px;top:3px;line-height:16px"><span class="c">注</span></div></div>
<div class="a nw" style="left:1306px;top:430px;width:21px;height:21px;background:#e74c3c;border-radius:3px;color:#fff;"><div class="a" style="left:5px;top:5px"><svg width="10" height="11" viewBox="0 0 10 11" fill="currentColor" ><path d="M3.3 0h3.4l.5 1.4H10v1.3H0V1.4h2.8z"/><path d="M.9 3.4h8.2L8.5 11h-7zM2.9 4.6v5.4h.9V4.6zm1.65 0v5.4h.9V4.6zm1.65 0v5.4h.9V4.6z" fill-rule="evenodd"/></svg></div></div>
<div class="a" style="left:249px;top:470px;width:13px;height:13px;border:1px solid #8f8f8f;border-radius:2px;background:#fff"></div>
<div class="a nw" style="left:272px;top:469px;width:119.5px;text-align:center;line-height:16px">38453</div>
<div class="a nw" style="left:391.5px;top:469px;width:217.0px;text-align:center;line-height:16px">20220122219</div>
<div class="a nw" style="left:608.5px;top:469px;width:108.0px;text-align:center;line-height:16px">5</div>
<div class="a nw" style="left:716.5px;top:469px;width:179.0px;text-align:center;line-height:16px;color:#f39c12"><span style="display:inline-block;width:10px;height:10px;border-radius:50%;background:#f39c12;vertical-align:-1px;margin-right:3px"></span>Status 3</div>
<div class="a nw" style="left:895.5px;top:469px;width:309.0px;text-align:center;line-height:16px">2022-01-22 10:57:00</div>
<div class="a nw" style="left:1265px;top:467px;width:37px;height:21px;background:#2c3e50;border-radius:3px;color:#fff;"><div class="a" style="left:5px;top:5px"><svg width="13" height="10" viewBox="0 0 13 10" fill="currentColor" ><rect width="3" height="10"/><rect x="3.8" width="9.2" height="2.6"/><rect x="3.8" y="3.7" width="9.2" height="2.6"/><rect x="3.8" y="7.4" width="9.2" height="2.6"/></svg></div><div class="a" style="left:20px;top:3px;line-height:16px"><span class="c">注</span></div></div>
<div class="a nw" style="left:1306px;top:467px;width:21px;height:21px;background:#e74c3c;border-radius:3px;color:#fff;"><div class="a" style="left:5px;top:5px"><svg width="10" height="11" viewBox="0 0 10 11" fill="currentColor" ><path d="M3.3 0h3.4l.5 1.4H10v1.3H0V1.4h2.8z"/><path d="M.9 3.4h8.2L8.5 11h-7zM2.9 4.6v5.4h.9V4.6zm1.65 0v5.4h.9V4.6zm1.65 0v5.4h.9V4.6z" fill-rule="evenodd"/></svg></div></div>
<div class="a" style="left:249px;top:506px;width:13px;height:13px;border:1px solid #8f8f8f;border-radius:2px;background:#fff"></div>
<div class="a nw" style="left:272px;top:506px;width:119.5px;text-align:center;line-height:16px">38452</div>
<div class="a nw" style="left:391.5px;top:506px;width:217.0px;text-align:center;line-height:16px">20220122218</div>
<div class="a nw" style="left:608.5px;top:506px;width:108.0px;text-align:center;line-height:16px">6</div>
<div class="a nw" style="left:716.5px;top:506px;width:179.0px;text-align:center;line-height:16px;color:#f39c12"><span style="display:inline-block;width:10px;height:10px;border-radius:50%;background:#f39c12;vertical-align:-1px;margin-right:3px"></span>Status 3</div>
<div class="a nw" style="left:895.5px;top:506px;width:309.0px;text-align:center;line-height:16px">2022-01-22 10:54:00</div>
<div class="a nw" style="left:1265px;top:504px;width:37px;height:21px;background:#2c3e50;border-radius:3px;color:#fff;"><div class="a" style="left:5px;top:5px"><svg width="13" height="10" viewBox="0 0 13 10" fill="currentColor" ><rect width="3" height="10"/><rect x="3.8" width="9.2" height="2.6"/><rect x="3.8" y="3.7" width="9.2" height="2.6"/><rect x="3.8" y="7.4" width="9.2" height="2.6"/></svg></div><div class="a" style="left:20px;top:3px;line-height:16px"><span class="c">注</span></div></div>
<div class="a nw" style="left:1306px;top:504px;width:21px;height:21px;background:#e74c3c;border-radius:3px;color:#fff;"><div class="a" style="left:5px;top:5px"><svg width="10" height="11" viewBox="0 0 10 11" fill="currentColor" ><path d="M3.3 0h3.4l.5 1.4H10v1.3H0V1.4h2.8z"/><path d="M.9 3.4h8.2L8.5 11h-7zM2.9 4.6v5.4h.9V4.6zm1.65 0v5.4h.9V4.6zm1.65 0v5.4h.9V4.6z" fill-rule="evenodd"/></svg></div></div>
<div class="a" style="left:249px;top:543px;width:13px;height:13px;border:1px solid #8f8f8f;border-radius:2px;background:#fff"></div>
<div class="a nw" style="left:272px;top:542px;width:119.5px;text-align:center;line-height:16px">38451</div>
<div class="a nw" style="left:391.5px;top:542px;width:217.0px;text-align:center;line-height:16px">20220122217</div>
<div class="a nw" style="left:608.5px;top:542px;width:108.0px;text-align:center;line-height:16px">4</div>
<div class="a nw" style="left:716.5px;top:542px;width:179.0px;text-align:center;line-height:16px;color:#f39c12"><span style="display:inline-block;width:10px;height:10px;border-radius:50%;background:#f39c12;vertical-align:-1px;margin-right:3px"></span>Status 3</div>
<div class="a nw" style="left:895.5px;top:542px;width:309.0px;text-align:center;line-height:16px">2022-01-22 10:51:00</div>
<div class="a nw" style="left:1265px;top:540px;width:37px;height:21px;background:#2c3e50;border-radius:3px;color:#fff;"><div class="a" style="left:5px;top:5px"><svg width="13" height="10" viewBox="0 0 13 10" fill="currentColor" ><rect width="3" height="10"/><rect x="3.8" width="9.2" height="2.6"/><rect x="3.8" y="3.7" width="9.2" height="2.6"/><rect x="3.8" y="7.4" width="9.2" height="2.6"/></svg></div><div class="a" style="left:20px;top:3px;line-height:16px"><span class="c">注</span></div></div>
<div class="a nw" style="left:1306px;top:540px;width:21px;height:21px;background:#e74c3c;border-radius:3px;color:#fff;"><div class="a" style="left:5px;top:5px"><svg width="10" height="11" viewBox="0 0 10 11" fill="currentColor" ><path d="M3.3 0h3.4l.5 1.4H10v1.3H0V1.4h2.8z"/><path d="M.9 3.4h8.2L8.5 11h-7zM2.9 4.6v5.4h.9V4.6zm1.65 0v5.4h.9V4.6zm1.65 0v5.4h.9V4.6z" fill-rule="evenodd"/></svg></div></div>
<div class="a" style="left:249px;top:579px;width:13px;height:13px;border:1px solid #8f8f8f;border-radius:2px;background:#fff"></div>
<div class="a nw" style="left:272px;top:579px;width:119.5px;text-align:center;line-height:16px">38450</div>
<div class="a nw" style="left:391.5px;top:579px;width:217.0px;text-align:center;line-height:16px">20220122216</div>
<div class="a nw" style="left:608.5px;top:579px;width:108.0px;text-align:center;line-height:16px">4</div>
<div class="a nw" style="left:716.5px;top:579px;width:179.0px;text-align:center;line-height:16px;color:#f39c12"><span style="display:inline-block;width:10px;height:10px;border-radius:50%;background:#f39c12;vertical-align:-1px;margin-right:3px"></span>Status 3</div>
<div class="a nw" style="left:895.5px;top:579px;width:309.0px;text-align:center;line-height:16px">2022-01-22 10:48:00</div>
<div class="a nw" style="left:1265px;top:577px;width:37px;height:21px;background:#2c3e50;border-radius:3px;color:#fff;"><div class="a" style="left:5px;top:5px"><svg width="13" height="10" viewBox="0 0 13 10" fill="currentColor" ><rect width="3" height="10"/><rect x="3.8" width="9.2" height="2.6"/><rect x="3.8" y="3.7" width="9.2" height="2.6"/><rect x="3.8" y="7.4" width="9.2" height="2.6"/></svg></div><div class="a" style="left:20px;top:3px;line-height:16px"><span class="c">注</span></div></div>
<div class="a nw" style="left:1306px;top:577px;width:21px;height:21px;background:#e74c3c;border-radius:3px;color:#fff;"><div class="a" style="left:5px;top:5px"><svg width="10" height="11" viewBox="0 0 10 11" fill="currentColor" ><path d="M3.3 0h3.4l.5 1.4H10v1.3H0V1.4h2.8z"/><path d="M.9 3.4h8.2L8.5 11h-7zM2.9 4.6v5.4h.9V4.6zm1.65 0v5.4h.9V4.6zm1.65 0v5.4h.9V4.6z" fill-rule="evenodd"/></svg></div></div>
<div class="a nw" style="left:238px;top:623px;line-height:16px;color:#333;word-spacing:1px"><span class="c">显示第</span> 1 <span class="c">到第</span> 10 <span class="c">条记录，总共</span> 38458 <span class="c">条记录</span> <span class="c">每页显示</span></div>
<div class="a nw" style="left:541px;top:618px;width:48px;height:29px;background:#f4f4f4;border:1px solid #ddd;border-radius:3px;color:#333;"><div class="a" style="left:12px;top:5px;line-height:16px">10</div><div class="a" style="left:28px;top:12px"><svg width="8" height="4"><path d="M0 4h8L4 0z" fill="#333"/></svg></div></div>
<div class="a nw" style="left:592px;top:623px;line-height:16px;color:#333"><span class="c">条记录</span></div>
<div class="a" style="left:935px;top:616px;width:357px;height:31px;border:1px solid #ddd;border-radius:3px;background:#f9f9f9;overflow:hidden"></div>
<div class="a nw" style="left:935px;top:623px;width:71px;text-align:center;line-height:16px;color:#444">Previous</div>
<div class="a" style="left:1006px;top:616px;width:1px;height:31px;background:#ddd"></div>
<div class="a" style="left:1006px;top:616px;width:32px;height:31px;background:#2c3e50"></div>
<div class="a nw" style="left:1006px;top:623px;width:32px;text-align:center;line-height:16px;color:#fff">1</div>
<div class="a" style="left:1038px;top:616px;width:1px;height:31px;background:#ddd"></div>
<div class="a nw" style="left:1038px;top:623px;width:30px;text-align:center;line-height:16px;color:#444">2</div>
<div class="a" style="left:1068px;top:616px;width:1px;height:31px;background:#ddd"></div>
<div class="a nw" style="left:1068px;top:623px;width:30px;text-align:center;line-height:16px;color:#444">3</div>
<div class="a" style="left:1098px;top:616px;width:1px;height:31px;background:#ddd"></div>
<div class="a nw" style="left:1098px;top:623px;width:30px;text-align:center;line-height:16px;color:#444">4</div>
<div class="a" style="left:1128px;top:616px;width:1px;height:31px;background:#ddd"></div>
<div class="a nw" style="left:1128px;top:623px;width:30px;text-align:center;line-height:16px;color:#444">5</div>
<div class="a" style="left:1158px;top:616px;width:1px;height:31px;background:#ddd"></div>
<div class="a" style="left:1159px;top:617px;width:33px;height:29px;background:#fff"></div>
<div class="a nw" style="left:1158px;top:623px;width:34px;text-align:center;line-height:16px;color:#999">...</div>
<div class="a" style="left:1192px;top:616px;width:1px;height:31px;background:#ddd"></div>
<div class="a nw" style="left:1192px;top:623px;width:51px;text-align:center;line-height:16px;color:#444">3846</div>
<div class="a" style="left:1243px;top:616px;width:1px;height:31px;background:#ddd"></div>
<div class="a nw" style="left:1243px;top:623px;width:49px;text-align:center;line-height:16px;color:#444">Next</div>
<div class="a" style="left:1297px;top:616px;width:47px;height:29px;border:1px solid #d2d6de;background:#fff"></div>
<div class="a nw" style="left:1348px;top:617px;width:40px;height:29px;background:#f4f4f4;border:1px solid #ddd;border-radius:3px;color:#444;"><div class="a" style="left:12px;top:5px;line-height:16px">Go</div></div></body></html>
